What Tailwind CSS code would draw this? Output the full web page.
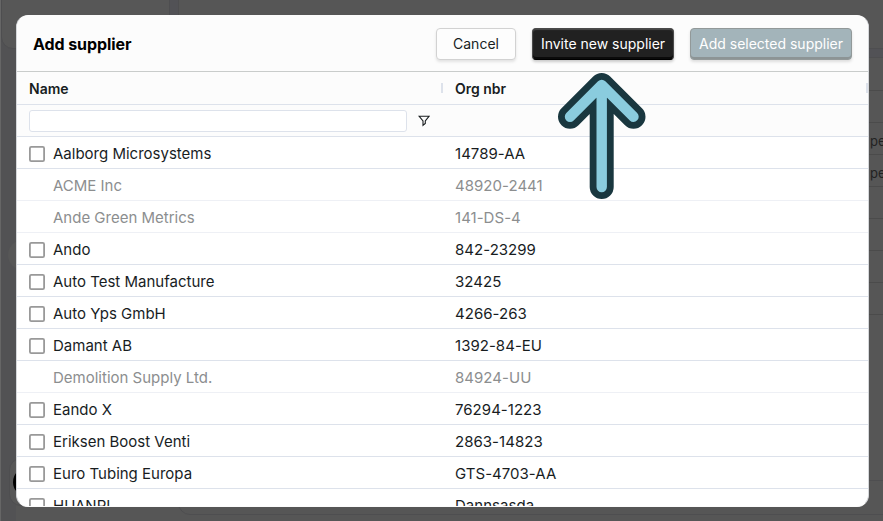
<!DOCTYPE html>
<html lang="en">
<head>
<meta charset="utf-8">
<title>Add supplier</title>
<script src="https://cdn.jsdelivr.net/npm/@tailwindcss/browser@4"></script>
</head>
<body class="relative h-[521px] w-[883px] overflow-hidden bg-[#565656] font-['Inter',sans-serif] text-[15px] text-[#181d1f]">
  <!-- Dimmed page behind the dialog -->
  <div class="absolute inset-0 overflow-hidden">
    <div class="absolute inset-y-0 left-0 w-4 bg-[#525254]"></div>
    <div class="absolute -top-4 left-px h-[65px] w-[169px] rounded-[12px] border border-[#4e4e50] bg-[#575757]"></div>
    <div class="absolute -top-4 left-[170px] h-[32px] w-[8px] bg-[#525256]"></div>
    <div class="absolute -top-4 left-[178px] h-[32px] w-px bg-[#4e4e50]"></div>
    <div class="absolute top-[48px] left-[860px] h-[10px] w-[23px] border-y border-[#4e4e50] bg-[#525256]"></div>
    <div class="absolute top-[90px] left-[860px] h-[193px] w-[23px] divide-y divide-[#4b4b4b] border-t border-[#4b4b4b]">
      <div class="h-[32px]"></div>
      <div class="h-[32px] pt-[8px] pl-[10px] text-[13px] leading-[20px] whitespace-nowrap text-[#222]">pe</div>
      <div class="h-[32px] pt-[8px] pl-[10px] text-[13px] leading-[20px] whitespace-nowrap text-[#222]">pe</div>
      <div class="h-[32px]"></div>
      <div class="h-[32px]"></div>
      <div class="h-[32px]"></div>
    </div>
    <div class="absolute top-[282px] left-[860px] h-px w-[23px] bg-[#4b4b4b]"></div>
    <div class="absolute top-[314px] left-[860px] h-px w-[23px] bg-[#4b4b4b]"></div>
    <div class="absolute top-[240px] left-[8px] size-[30px] rounded-full bg-[#575757]"></div>
    <div class="absolute top-[458px] left-[9px] h-[48px] w-[60px] rounded-[12px] border border-[#4e4e50] bg-[#575757]"></div>
    <div class="absolute top-[467px] left-[13px] size-[30px] rounded-full bg-black"></div>
    <div class="absolute top-[480px] left-[178px] h-[35px] w-[720px] rounded-[12px] border border-[#4e4e50]"></div>
    <div class="absolute inset-y-0 left-0 w-px bg-[#666]"></div>
  </div>

  <!-- Dialog -->
  <main class="relative mt-[15px] ml-4 flex h-[492px] w-[853px] flex-col overflow-hidden rounded-[12px] border border-[#d5d7da] border-y-[#fcfcfc] bg-white">
    <header class="flex h-[56px] shrink-0 items-center border-b border-[#c9cccb] bg-[#fcfcfc] pr-4 pl-4">
      <h1 class="flex-1 text-[16px] font-bold tracking-[-0.08px] text-black">Add supplier</h1>
      <div class="flex gap-4 text-[14px]">
        <button class="h-[32px] w-[80px] rounded-[4px] border border-[#d2d2d2] bg-[#fdfdfd] pb-px whitespace-nowrap shadow-[0_2px_3px_rgba(0,0,0,0.1)]">Cancel</button>
        <button class="h-[32px] w-[142px] rounded-[4px] border border-[#4a4a4a] border-b-black bg-[#212121] pb-px whitespace-nowrap text-white shadow-[inset_0_-2px_0_#0a0a0a,inset_0_1px_1px_#4a4a4a,0_2px_3px_rgba(0,0,0,0.2)]">Invite new supplier</button>
        <button class="h-[32px] w-[162px] rounded-[4px] border border-[#929999] bg-[#a3b4ba] pb-px whitespace-nowrap text-white shadow-[inset_0_-2px_0_#8c9495,0_2px_3px_rgba(0,0,0,0.12)]">Add selected supplier</button>
      </div>
    </header>
    <div class="flex h-[33px] shrink-0 items-center border-b border-[#dde2eb] bg-[#fcfcfc] pl-3 text-[14px] font-semibold">
      <div class="w-[412px]">Name</div>
      <div class="h-[10px] w-[2px] bg-[#dde2eb]"></div>
      <div class="flex-1 pl-3">Org nbr</div>
      <div class="h-[10px] w-[2px] bg-[#dde2eb]"></div>
    </div>
    <div class="flex h-[32px] shrink-0 items-center border-b border-[#dde2eb] bg-[#fcfcfc] pl-3">
      <input type="text" aria-label="Filter name" class="h-[22px] w-[378px] rounded-[3px] border border-[#dde2eb] bg-white">
      <svg class="ml-[10.5px] h-[12px] w-[12px]" viewBox="0 0 12 12" fill="none" stroke="#181d1f" stroke-width="1.1"><path d="M1 1.2H11.2L7.3 6V8.5L5 10.3V6Z"/></svg>
    </div>
    <div id="rows" class="flex flex-col"></div>
  </main>

  <!-- Callout arrow over the dialog -->
  <svg class="absolute top-[68px] left-[552px]" width="100" height="136" viewBox="0 0 100 136" fill="none" stroke-linecap="round" stroke-linejoin="round">
    <path d="M49.7 119V17M18 48.7L49.7 17L81.5 48.7" stroke="#19373f" stroke-width="24"/>
    <path d="M49.7 119V17M18 48.7L49.7 17L81.5 48.7" stroke="#8accde" stroke-width="10.4"/>
  </svg>

  <script>
    const suppliers = [
      ["Aalborg Microsystems", "14789-AA", true],
      ["ACME Inc", "48920-2441", false],
      ["Ande Green Metrics", "141-DS-4", false],
      ["Ando", "842-23299", true],
      ["Auto Test Manufacture", "32425", true],
      ["Auto Yps GmbH", "4266-263", true],
      ["Damant AB", "1392-84-EU", true],
      ["Demolition Supply Ltd.", "84924-UU", false],
      ["Eando X", "76294-1223", true],
      ["Eriksen Boost Venti", "2863-14823", true],
      ["Euro Tubing Europa", "GTS-4703-AA", true],
      ["HUANRI", "Dannsasda", true]
    ];
    document.getElementById("rows").innerHTML = suppliers.map(([name, org, on]) => `
      <div class="flex h-[32px] shrink-0 items-start border-b pl-3 leading-[24px] ${on ? "border-[#dde2eb]" : "border-[#eef0f5] text-[#8c8e8f]"}">
        <svg class="mr-2 mt-[8.5px] size-[16px] shrink-0" viewBox="0 0 16 16" fill="none">${on ? '<rect x="0.9" y="0.9" width="14.2" height="14.2" rx="1.4" stroke="#999" stroke-width="1.8"/>' : ""}</svg>
        <div class="w-[402px] pt-[5px]">${name}</div>
        <div class="pt-[5px] tracking-[0.03px]">${org}</div>
      </div>`).join("");
  </script>
</body>
</html>
